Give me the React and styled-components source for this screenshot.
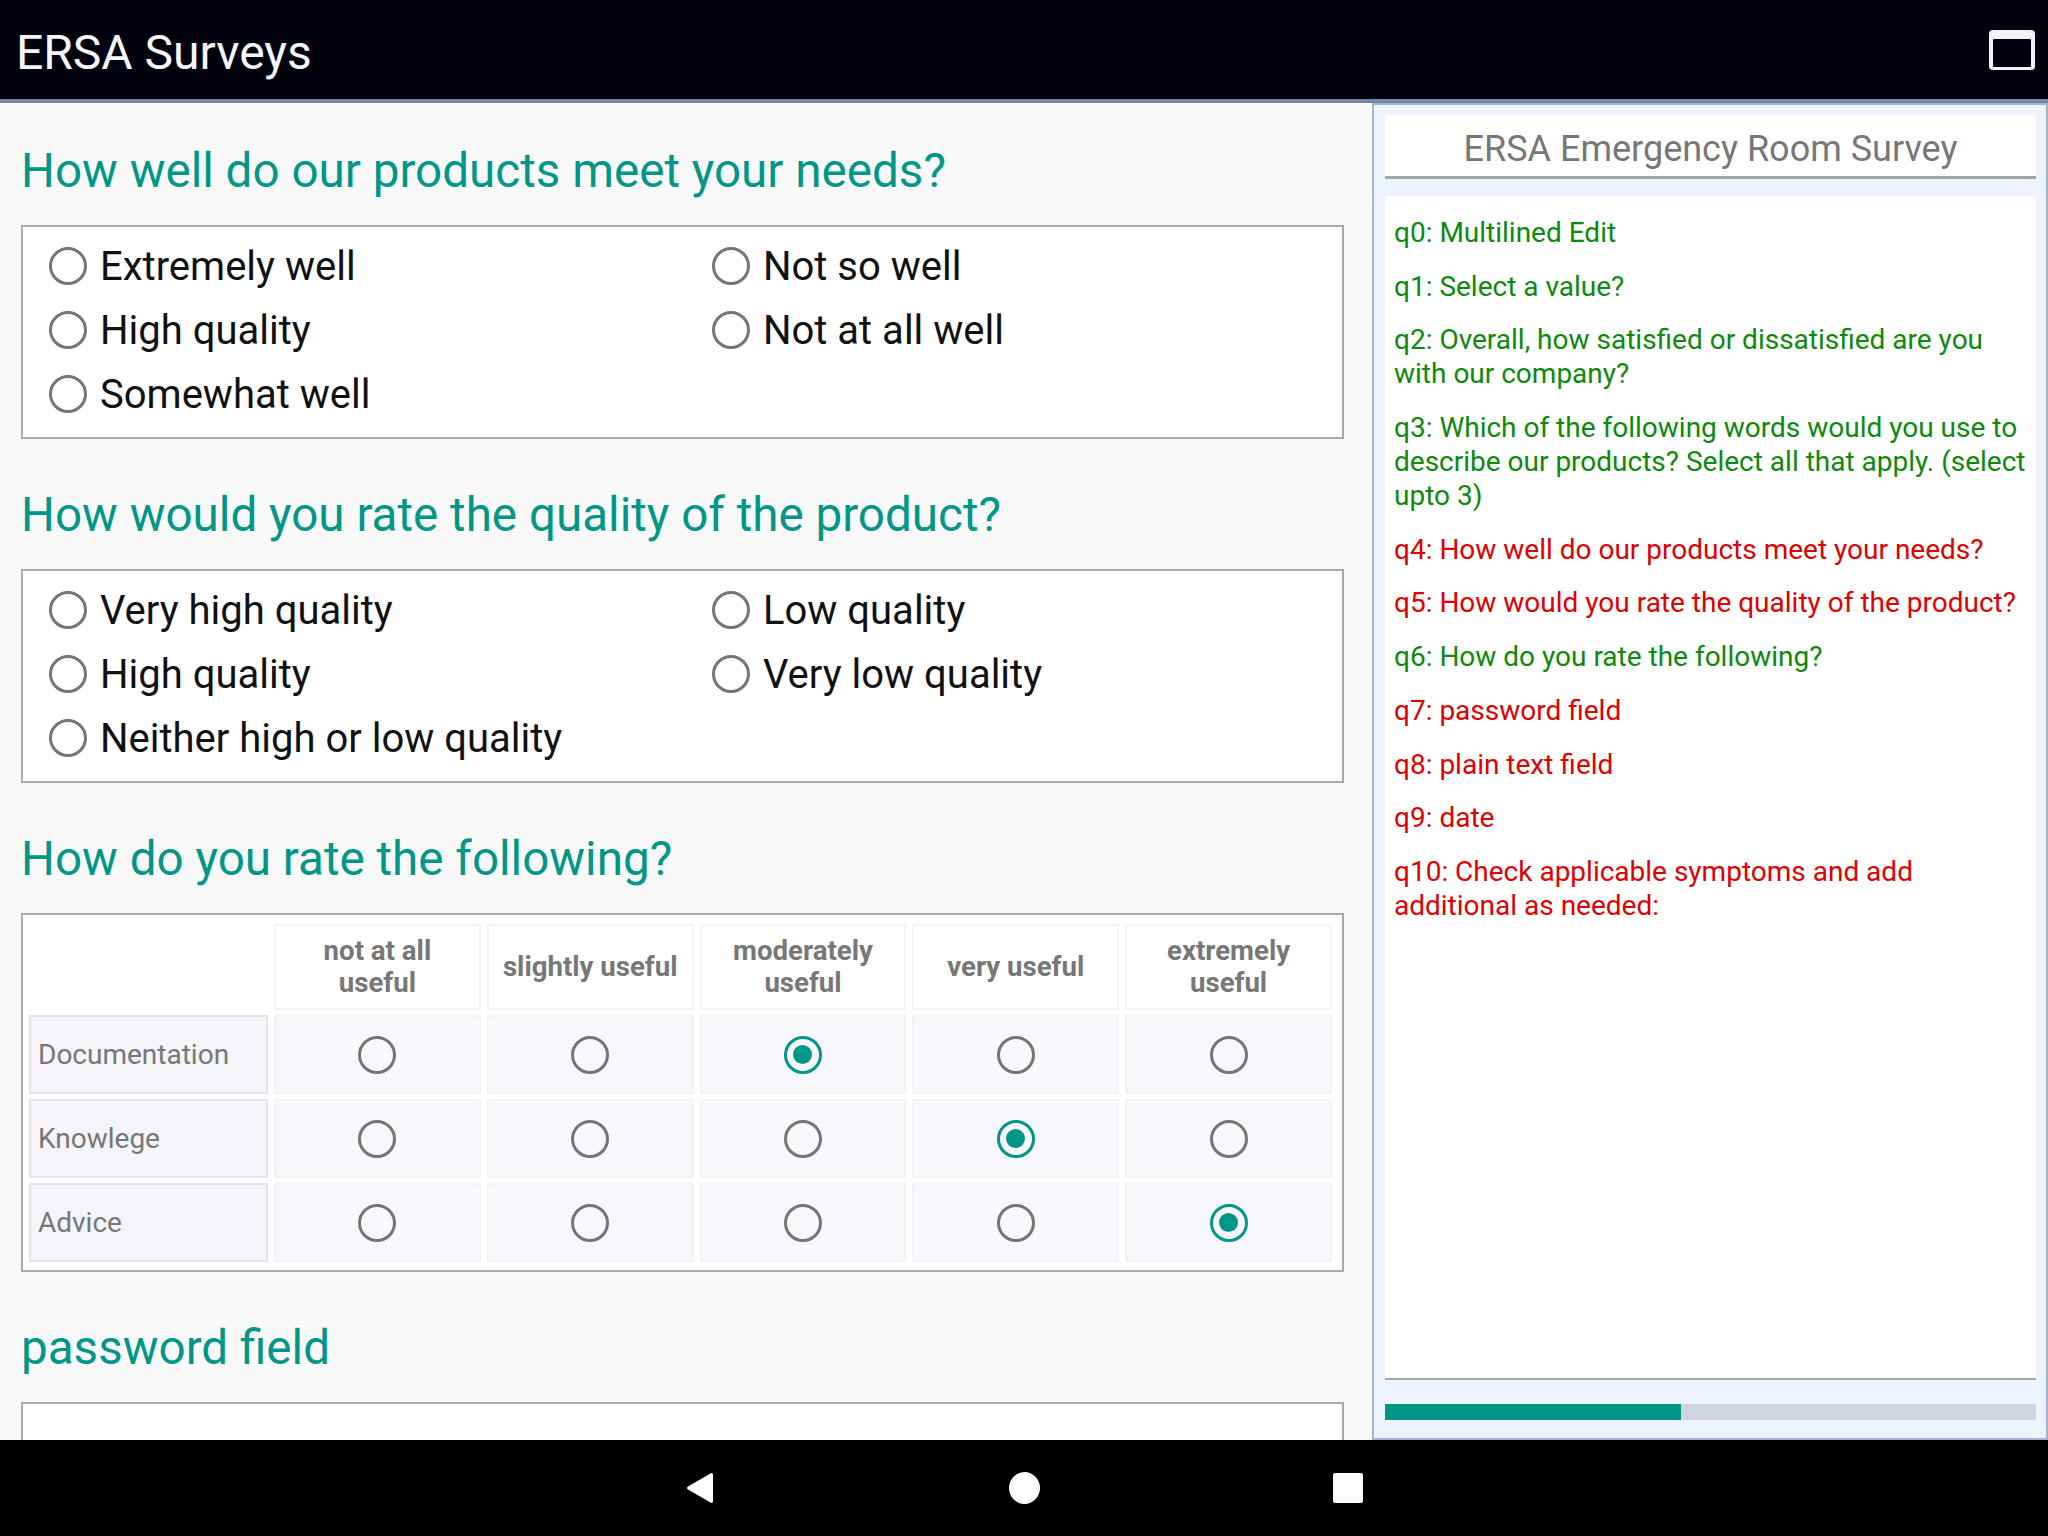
import React from 'react';
import styled, { createGlobalStyle } from 'styled-components';

const GlobalStyle = createGlobalStyle`
  html, body {
    margin: 0;
    padding: 0;
  }
  body {
    font-family: Roboto, "Noto Sans", sans-serif;
    background: #000;
  }
  * {
    box-sizing: border-box;
  }
`;

const Screen = styled.div`
  width: 2048px;
  height: 1536px;
  display: flex;
  flex-direction: column;
  overflow: hidden;
`;

const TopBar = styled.header`
  height: 103px;
  flex-shrink: 0;
  background: #03030f;
  border-bottom: 4px solid #7888a8;
  display: flex;
  align-items: center;
  justify-content: space-between;
  padding: 0 13px 0 16px;
`;

const AppTitle = styled.h1`
  margin: 0;
  padding-top: 6px;
  font-size: 48px;
  font-weight: 400;
  color: #f6f6fa;
`;

const Main = styled.div`
  flex: 1;
  min-height: 0;
  display: flex;
`;

const LeftPane = styled.main`
  width: 1372px;
  flex-shrink: 0;
  background: #f9f9f9;
  overflow: hidden;
  padding: 39px 28px 0 21px;
  display: flex;
  flex-direction: column;
  gap: 47px;
`;

const Section = styled.section`
  display: flex;
  flex-direction: column;
`;

const Question = styled.h2`
  margin: 0 0 25px;
  font-size: 47.6px;
  line-height: 58px;
  font-weight: 400;
  color: #009688;
`;

const Box = styled.div`
  background: #fff;
  border: 2px solid #aaaaaa;
  flex-shrink: 0;
`;

const ChoiceGrid = styled(Box)`
  display: grid;
  grid-auto-flow: column;
  grid-template-rows: repeat(3, 64px);
  grid-template-columns: 663px 1fr;
  padding: 7px 0 11px 26px;
`;

const Choice = styled.label`
  display: flex;
  align-items: center;
  gap: 13px;
  font-size: 40px;
  color: #111;
`;

const Radio = styled.span`
  width: 38px;
  height: 38px;
  flex-shrink: 0;
  border-radius: 50%;
  border: 3px solid ${p => (p.$checked ? '#009688' : '#757575')};
  display: inline-flex;
  align-items: center;
  justify-content: center;
  &::after {
    content: '';
    width: 19px;
    height: 19px;
    border-radius: 50%;
    background: ${p => (p.$checked ? '#009688' : 'transparent')};
  }
`;

const MatrixBox = styled(Box)`
  padding: 4px 4px 3px 0;
`;

const Table = styled.table`
  width: 100%;
  table-layout: fixed;
  border-collapse: separate;
  border-spacing: 6px 5px;
`;

const HeadRow = styled.tr`
  height: 86px;
`;

const BodyRow = styled.tr`
  height: 79px;
`;

const ColHead = styled.th`
  background: ${p => (p.$blank ? 'transparent' : '#fff')};
  border: 2px solid ${p => (p.$blank ? 'transparent' : '#f4f4f6')};
  width: ${p => (p.$blank ? '239px' : 'auto')};
  padding: 0 10px;
  font-size: 27.6px;
  line-height: 32px;
  font-weight: 700;
  color: #777;
  text-align: center;
`;

const RowHead = styled.td`
  background: #f4f4f9;
  border: 2px solid #e4e4ec;
  padding: 0 7px;
  font-size: 28px;
  color: #777;
`;

const Cell = styled.td`
  background: #f8f8fc;
  border: 2px solid #f2f2f7;
  text-align: center;
  vertical-align: middle;
  & > span {
    vertical-align: middle;
  }
`;

const TextField = styled(Box)`
  height: 120px;
`;

const RightPane = styled.aside`
  flex: 1;
  background: #eef4fd;
  border: 2px solid #a3b3d6;
  padding: 10px 10px 18px 11px;
  display: flex;
  flex-direction: column;
`;

const SurveyTitle = styled.div`
  background: #fff;
  border-bottom: 3px solid #a4a4a4;
  padding-top: 8px;
  line-height: 53px;
  font-size: 36px;
  color: #777;
  text-align: center;
`;

const QuestionList = styled.ol`
  flex: 1;
  list-style: none;
  margin: 17px 0 0;
  padding: 20px 8px 0 9px;
  background: #fff;
  border-bottom: 2px solid #a4a4a4;
`;

const ListItem = styled.li`
  font-size: 28px;
  line-height: 34px;
  margin-bottom: 19.7px;
  color: ${p => (p.$done ? '#0b8a0b' : '#e00000')};
`;

const Progress = styled.div`
  margin-top: 24px;
  height: 16px;
  background: #d0d4de;
`;

const ProgressFill = styled.div`
  height: 100%;
  background: #009688;
`;

const NavBar = styled.nav`
  height: 96px;
  flex-shrink: 0;
  background: #000;
  display: flex;
  justify-content: center;
  align-items: center;
`;

const NavSlot = styled.div`
  width: 324px;
  display: flex;
  justify-content: center;
  align-items: center;
`;

const HomeDot = styled.div`
  width: 31px;
  height: 32px;
  border-radius: 50%;
  background: #fff;
`;

const RecentSquare = styled.div`
  width: 30px;
  height: 30px;
  border-radius: 2px;
  background: #fff;
`;

const WindowIcon = () => (
  <svg width="46" height="40" viewBox="0 0 46 40">
    <rect x="0" y="0" width="46" height="40" rx="4" fill="#f2f2f6" />
    <rect x="4" y="9" width="38" height="28" rx="1" fill="#03030f" />
  </svg>
);

const BackIcon = () => (
  <svg width="28" height="32" viewBox="0 0 28 32">
    <path d="M27 3 L27 29 Q27 32 24.5 30.6 L2 17.6 Q0 16 2 14.4 L24.5 1.4 Q27 0 27 3 Z" fill="#fff" />
  </svg>
);

const needs = [
  'Extremely well',
  'High quality',
  'Somewhat well',
  'Not so well',
  'Not at all well'
];

const quality = [
  'Very high quality',
  'High quality',
  'Neither high or low quality',
  'Low quality',
  'Very low quality'
];

const scale = [
  'not at all useful',
  'slightly useful',
  'moderately useful',
  'very useful',
  'extremely useful'
];

const ratings = [
  { label: 'Documentation', value: 2 },
  { label: 'Knowlege', value: 3 },
  { label: 'Advice', value: 4 }
];

const questions = [
  { text: 'q0: Multilined Edit', done: true },
  { text: 'q1: Select a value?', done: true },
  { text: 'q2: Overall, how satisfied or dissatisfied are you with our company?', done: true },
  { text: 'q3: Which of the following words would you use to describe our products? Select all that apply. (select upto 3)', done: true },
  { text: 'q4: How well do our products meet your needs?', done: false },
  { text: 'q5: How would you rate the quality of the product?', done: false },
  { text: 'q6: How do you rate the following?', done: true },
  { text: 'q7: password field', done: false },
  { text: 'q8: plain text field', done: false },
  { text: 'q9: date', done: false },
  { text: 'q10: Check applicable symptoms and add additional as needed:', done: false }
];

const ChoiceQuestion = ({ title, options }) => (
  <Section>
    <Question>{title}</Question>
    <ChoiceGrid>
      {options.map(o => (
        <Choice key={o}>
          <Radio />
          {o}
        </Choice>
      ))}
    </ChoiceGrid>
  </Section>
);

export default function App() {
  const progress = 45.5;

  return (
    <Screen>
      <GlobalStyle />
      <TopBar>
        <AppTitle>ERSA Surveys</AppTitle>
        <WindowIcon />
      </TopBar>
      <Main>
        <LeftPane>
          <ChoiceQuestion title="How well do our products meet your needs?" options={needs} />
          <ChoiceQuestion title="How would you rate the quality of the product?" options={quality} />
          <Section>
            <Question>How do you rate the following?</Question>
            <MatrixBox>
              <Table>
                <thead>
                  <HeadRow>
                    <ColHead $blank />
                    {scale.map(s => (
                      <ColHead key={s}>{s}</ColHead>
                    ))}
                  </HeadRow>
                </thead>
                <tbody>
                  {ratings.map(r => (
                    <BodyRow key={r.label}>
                      <RowHead>{r.label}</RowHead>
                      {scale.map((s, i) => (
                        <Cell key={s}>
                          <Radio $checked={i === r.value} />
                        </Cell>
                      ))}
                    </BodyRow>
                  ))}
                </tbody>
              </Table>
            </MatrixBox>
          </Section>
          <Section>
            <Question>password field</Question>
            <TextField />
          </Section>
        </LeftPane>
        <RightPane>
          <SurveyTitle>ERSA Emergency Room Survey</SurveyTitle>
          <QuestionList>
            {questions.map(q => (
              <ListItem key={q.text} $done={q.done}>{q.text}</ListItem>
            ))}
          </QuestionList>
          <Progress>
            <ProgressFill style={{ width: `${progress}%` }} />
          </Progress>
        </RightPane>
      </Main>
      <NavBar>
        <NavSlot><BackIcon /></NavSlot>
        <NavSlot><HomeDot /></NavSlot>
        <NavSlot><RecentSquare /></NavSlot>
      </NavBar>
    </Screen>
  );
}
